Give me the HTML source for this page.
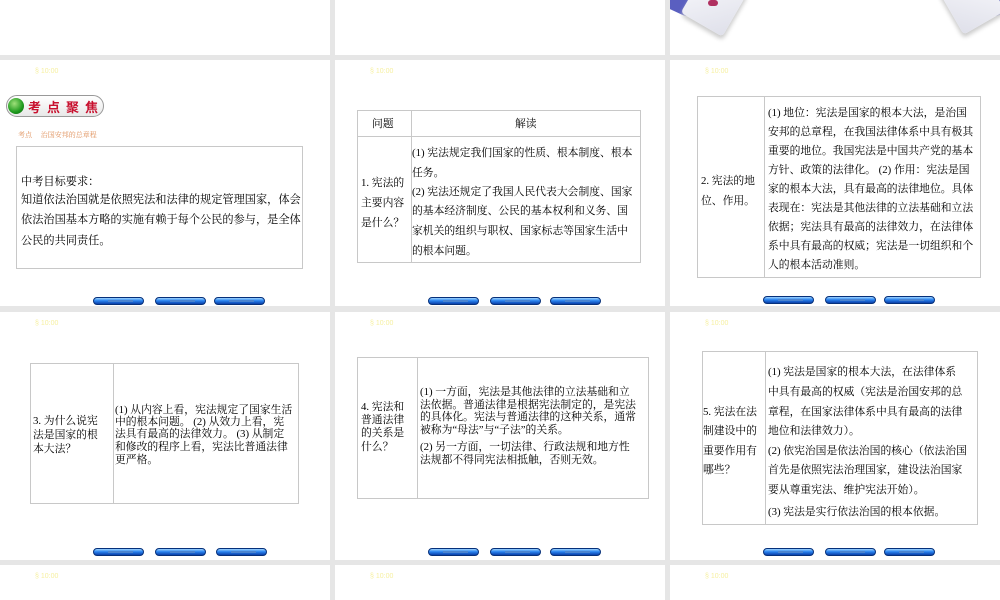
<!DOCTYPE html>
<html><head><meta charset="utf-8">
<style>
*{margin:0;padding:0;box-sizing:border-box}
body{width:1000px;height:600px;background:#e6e6e6;position:relative;overflow:hidden;font-family:"Liberation Serif","Noto Serif CJK SC","Noto Sans CJK SC",serif;color:#000}
.s{position:absolute;background:#fff;width:330px;overflow:hidden}
.a{position:absolute}
.l{position:absolute;white-space:nowrap;font-size:10.8px;line-height:12px;height:12px}
.tb{position:absolute;border:1px solid #c8c8c8}
.vd{position:absolute;top:0;bottom:0;width:1px;background:#c8c8c8}
.yl{position:absolute;left:35px;top:8px;font-size:7px;color:#f6f0a0;font-family:"Liberation Sans",sans-serif}
.btn{position:absolute;width:51px;height:8px;border-radius:5px;background:linear-gradient(#9fd4ff,#2a84f0 45%,#0a3fa8);border:1px solid #06307a}
.btn:after{content:"";position:absolute;left:14px;right:10px;top:2px;height:2px;background:#4a84d0}
</style></head><body>

<!-- row 1 -->
<div class="s" style="left:0;top:0;height:55px"></div>
<div class="s" style="left:335px;top:0;height:55px"></div>
<div class="s" style="left:670px;top:0;height:55px">
  <div class="a" style="left:-6px;top:-14px;width:30px;height:26px;background:#5a5fc0;transform:rotate(25deg);border-radius:4px"></div>
  <div class="a" style="left:20px;top:-22px;width:48px;height:50px;background:linear-gradient(135deg,#fafafd,#dfe0ea);transform:rotate(30deg);border-radius:4px;box-shadow:2px 3px 4px #ccc"></div>
  <div class="a" style="left:38px;top:0;width:10px;height:6px;background:#b03060;border-radius:3px"></div>
  <div class="a" style="left:318px;top:-14px;width:30px;height:26px;background:#5a5fc0;transform:rotate(-25deg);border-radius:4px"></div>
  <div class="a" style="left:278px;top:-24px;width:48px;height:50px;background:linear-gradient(225deg,#fafafd,#dfe0ea);transform:rotate(-30deg);border-radius:4px;box-shadow:-2px 3px 4px #ccc"></div>
</div>

<!-- row 2, slide A -->
<div class="s" style="left:0;top:60px;height:246px">
  <div class="yl">§ 10:00</div>
  <div class="a" style="left:6px;top:35px;width:98px;height:22px;border:1px solid #999;border-radius:11px;background:linear-gradient(#fff,#e8e8e8)"></div>
  <div class="a" style="left:8px;top:38px;width:16px;height:16px;border-radius:50%;background:radial-gradient(circle at 40% 35%,#9fe07a,#1e9a1e 60%,#0a5a0a)"></div>
  <div class="a" style="left:28px;top:37px;font-size:13px;color:#c8102e;letter-spacing:6px;font-weight:bold;font-family:'Noto Sans CJK SC',sans-serif">考点聚焦</div>
  <div class="a" style="left:18px;top:70px;font-size:7px;color:#e0905a;white-space:nowrap">考点　 治国安邦的总章程</div>
  <div class="tb" style="left:16px;top:86px;width:287px;height:123px"></div>
  <div class="l" style="left:21px;top:116px;font-size:11.2px">中考目标要求：</div>
  <div class="l" style="left:21px;top:134px;font-size:11.2px">知道依法治国就是依照宪法和法律的规定管理国家，体会</div>
  <div class="l" style="left:21px;top:154px;font-size:11.2px">依法治国基本方略的实施有赖于每个公民的参与，是全体</div>
  <div class="l" style="left:21px;top:175px;font-size:11.2px">公民的共同责任。</div>
  <div class="btn" style="left:93px;top:237px"></div><div class="btn" style="left:155px;top:237px"></div><div class="btn" style="left:214px;top:237px"></div>
</div>

<!-- row 2, slide B -->
<div class="s" style="left:335px;top:60px;height:246px">
  <div class="yl">§ 10:00</div>
  <div class="tb" style="left:22px;top:50px;width:284px;height:153px">
    <div class="vd" style="left:53px"></div>
    <div class="a" style="left:0;right:0;top:25px;height:1px;background:#c8c8c8"></div>
  </div>
  <div class="l" style="left:37px;top:58px">问题</div>
  <div class="l" style="left:180px;top:58px">解读</div>
  <div class="l" style="left:26px;top:117px">1. 宪法的</div>
  <div class="l" style="left:26px;top:137px">主要内容</div>
  <div class="l" style="left:26px;top:157px">是什么？</div>
  <div class="l" style="left:77px;top:87px">(1) 宪法规定我们国家的性质、根本制度、根本</div>
  <div class="l" style="left:77px;top:107px">任务。</div>
  <div class="l" style="left:77px;top:126px">(2) 宪法还规定了我国人民代表大会制度、国家</div>
  <div class="l" style="left:77px;top:145px">的基本经济制度、公民的基本权利和义务、国</div>
  <div class="l" style="left:77px;top:165px">家机关的组织与职权、国家标志等国家生活中</div>
  <div class="l" style="left:77px;top:185px">的根本问题。</div>
  <div class="btn" style="left:93px;top:237px"></div><div class="btn" style="left:155px;top:237px"></div><div class="btn" style="left:215px;top:237px"></div>
</div>

<!-- row 2, slide C -->
<div class="s" style="left:670px;top:60px;height:246px">
  <div class="yl">§ 10:00</div>
  <div class="tb" style="left:27px;top:36px;width:284px;height:182px"><div class="vd" style="left:66px"></div></div>
  <div class="l" style="left:31px;top:115px">2. 宪法的地</div>
  <div class="l" style="left:31px;top:135px">位、作用。</div>
  <div class="l" style="left:98px;top:47px">(1) 地位：宪法是国家的根本大法，是治国</div>
  <div class="l" style="left:98px;top:66px">安邦的总章程，在我国法律体系中具有极其</div>
  <div class="l" style="left:98px;top:85px">重要的地位。我国宪法是中国共产党的基本</div>
  <div class="l" style="left:98px;top:104px">方针、政策的法律化。 (2) 作用：宪法是国</div>
  <div class="l" style="left:98px;top:123px">家的根本大法，具有最高的法律地位。具体</div>
  <div class="l" style="left:98px;top:142px">表现在：宪法是其他法律的立法基础和立法</div>
  <div class="l" style="left:98px;top:161px">依据；宪法具有最高的法律效力，在法律体</div>
  <div class="l" style="left:98px;top:180px">系中具有最高的权威；宪法是一切组织和个</div>
  <div class="l" style="left:98px;top:199px">人的根本活动准则。</div>
  <div class="btn" style="left:93px;top:236px"></div><div class="btn" style="left:155px;top:236px"></div><div class="btn" style="left:214px;top:236px"></div>
</div>

<!-- row 3, slide D -->
<div class="s" style="left:0;top:312px;height:248px">
  <div class="yl">§ 10:00</div>
  <div class="tb" style="left:30px;top:51px;width:269px;height:141px"><div class="vd" style="left:82px"></div></div>
  <div class="l" style="left:33px;top:103px">3. 为什么说宪</div>
  <div class="l" style="left:33px;top:117px">法是国家的根</div>
  <div class="l" style="left:33px;top:131px">本大法？</div>
  <div class="l" style="left:115px;top:92px">(1) 从内容上看，宪法规定了国家生活</div>
  <div class="l" style="left:115px;top:104px">中的根本问题。 (2) 从效力上看，宪</div>
  <div class="l" style="left:115px;top:116px">法具有最高的法律效力。 (3) 从制定</div>
  <div class="l" style="left:115px;top:129px">和修改的程序上看，宪法比普通法律</div>
  <div class="l" style="left:115px;top:142px">更严格。</div>
  <div class="btn" style="left:93px;top:236px"></div><div class="btn" style="left:155px;top:236px"></div><div class="btn" style="left:216px;top:236px"></div>
</div>

<!-- row 3, slide E -->
<div class="s" style="left:335px;top:312px;height:248px">
  <div class="yl">§ 10:00</div>
  <div class="tb" style="left:22px;top:45px;width:292px;height:142px"><div class="vd" style="left:59px"></div></div>
  <div class="l" style="left:26px;top:89px">4. 宪法和</div>
  <div class="l" style="left:26px;top:102px">普通法律</div>
  <div class="l" style="left:26px;top:115px">的关系是</div>
  <div class="l" style="left:26px;top:129px">什么？</div>
  <div class="l" style="left:85px;top:74px">(1) 一方面，宪法是其他法律的立法基础和立</div>
  <div class="l" style="left:85px;top:87px">法依据。普通法律是根据宪法制定的，是宪法</div>
  <div class="l" style="left:85px;top:99px">的具体化。宪法与普通法律的这种关系，通常</div>
  <div class="l" style="left:85px;top:112px">被称为“母法”与“子法”的关系。</div>
  <div class="l" style="left:85px;top:129px">(2) 另一方面，一切法律、行政法规和地方性</div>
  <div class="l" style="left:85px;top:142px">法规都不得同宪法相抵触，否则无效。</div>
  <div class="btn" style="left:93px;top:236px"></div><div class="btn" style="left:155px;top:236px"></div><div class="btn" style="left:215px;top:236px"></div>
</div>

<!-- row 3, slide F -->
<div class="s" style="left:670px;top:312px;height:248px">
  <div class="yl">§ 10:00</div>
  <div class="tb" style="left:32px;top:39px;width:276px;height:174px"><div class="vd" style="left:62px"></div></div>
  <div class="l" style="left:33px;top:94px">5. 宪法在法</div>
  <div class="l" style="left:33px;top:113px">制建设中的</div>
  <div class="l" style="left:33px;top:133px">重要作用有</div>
  <div class="l" style="left:33px;top:152px">哪些？</div>
  <div class="l" style="left:98px;top:54px">(1) 宪法是国家的根本大法，在法律体系</div>
  <div class="l" style="left:98px;top:74px">中具有最高的权威（宪法是治国安邦的总</div>
  <div class="l" style="left:98px;top:94px">章程，在国家法律体系中具有最高的法律</div>
  <div class="l" style="left:98px;top:113px">地位和法律效力）。</div>
  <div class="l" style="left:98px;top:133px">(2) 依宪治国是依法治国的核心（依法治国</div>
  <div class="l" style="left:98px;top:152px">首先是依照宪法治理国家，建设法治国家</div>
  <div class="l" style="left:98px;top:172px">要从尊重宪法、维护宪法开始）。</div>
  <div class="l" style="left:98px;top:194px">(3) 宪法是实行依法治国的根本依据。</div>
  <div class="btn" style="left:93px;top:236px"></div><div class="btn" style="left:155px;top:236px"></div><div class="btn" style="left:214px;top:236px"></div>
</div>

<!-- row 4 -->
<div class="s" style="left:0;top:565px;height:35px"><div class="yl">§ 10:00</div></div>
<div class="s" style="left:335px;top:565px;height:35px"><div class="yl">§ 10:00</div></div>
<div class="s" style="left:670px;top:565px;height:35px"><div class="yl">§ 10:00</div></div>
</body></html>
